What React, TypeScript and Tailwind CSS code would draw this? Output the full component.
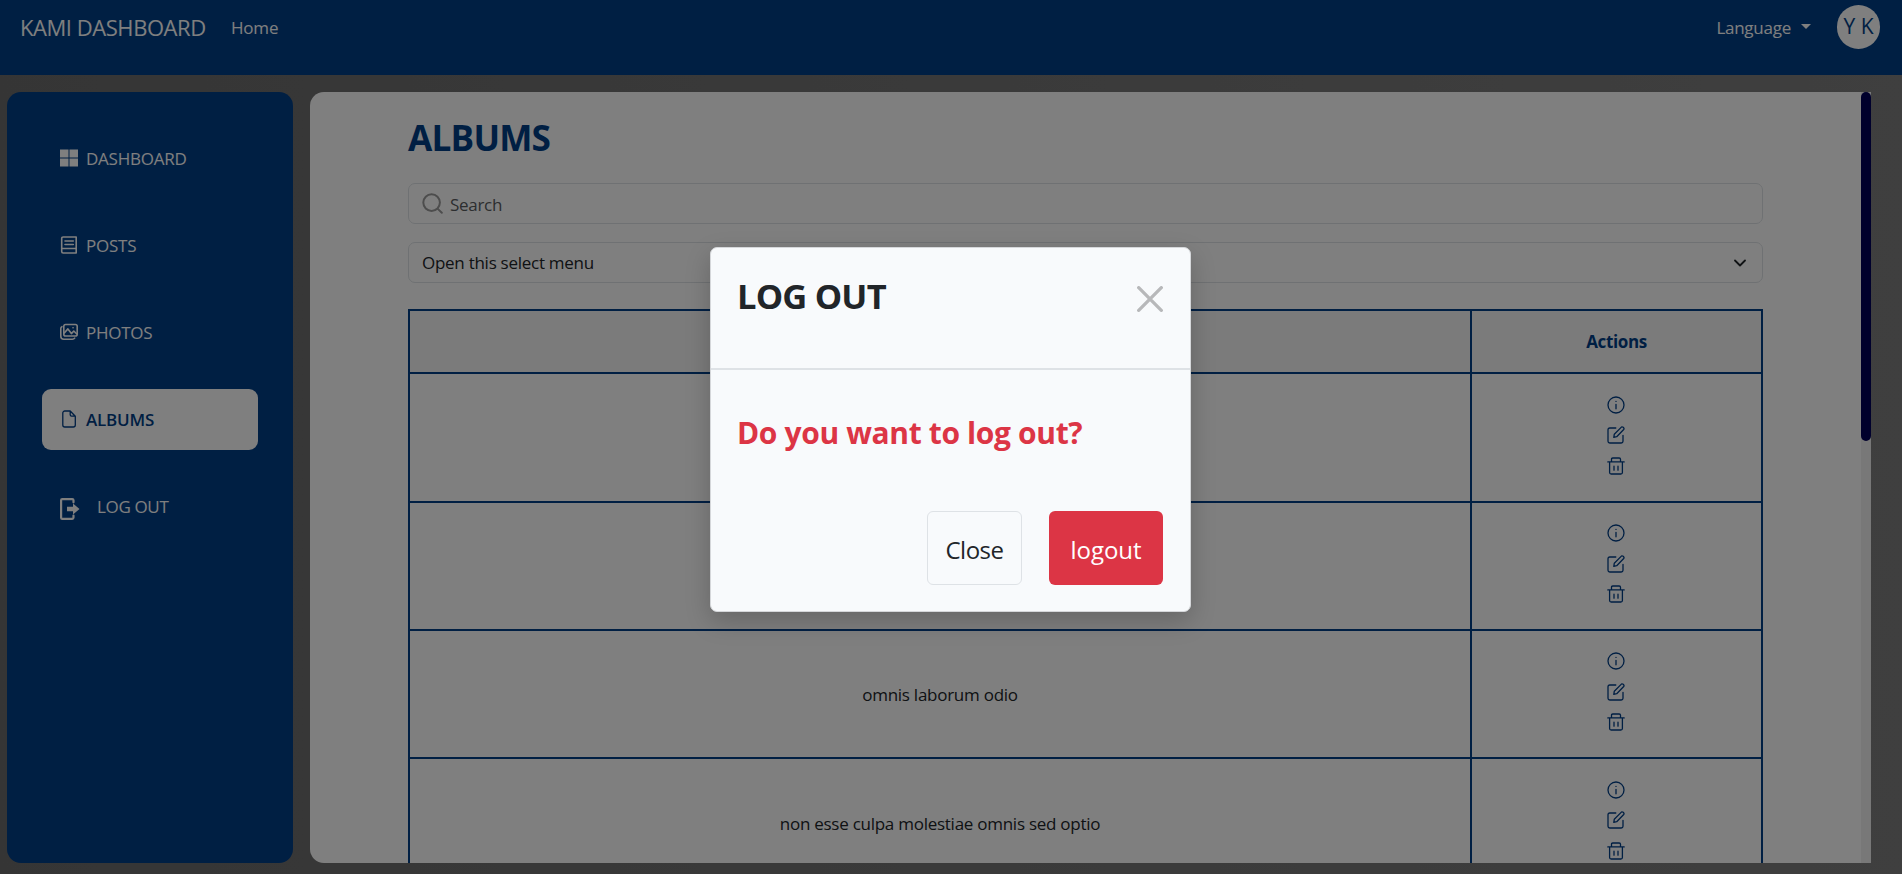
import type { ReactNode } from "react";

const stroke = {
  fill: "none",
  stroke: "currentColor",
  strokeLinecap: "round" as const,
  strokeLinejoin: "round" as const,
};

function GridIcon() {
  return (
    <svg className="ml-px h-[18px] w-[18px]" viewBox="0 0 18 18" fill="currentColor">
      <path d="M0 .5h8.500v8H0zM9.500.5H18v8H9.500zM0 9.500h8.500v8H0zM9.500 9.500H18v8H9.500z" />
    </svg>
  );
}

function PostsIcon() {
  return (
    <svg className="ml-px h-[18px] w-[18px]" viewBox="0 0 18 18" {...stroke} strokeWidth="1.600">
      <path d="M3.200 1h13v16h-13q-1.500 0-1.500-1.500v-13Q1.700 1 3.200 1zM5 5h8.300M5 8.500h8.300M2 12.500h14" />
    </svg>
  );
}

function PhotosIcon() {
  return (
    <svg className="ml-px h-[18px] w-[18px]" viewBox="0 0 18 18" {...stroke} strokeWidth="1.600">
      <rect x="3.800" y="1.500" width="13.400" height="11.500" rx="1.800" />
      <path d="M1.900 3.700Q.800 4.200.800 5.700v7.500q0 3 3 3h8.500q1.700 0 2.400-1.100M4.500 9.800l3.400-3.900 3.500 4.700 2.400-2.600 2.700 2.700" />
      <path d="M13 4.800h.1" strokeWidth="1.600" />
    </svg>
  );
}

function FileIcon() {
  return (
    <svg className="ml-px h-[18px] w-[18px]" viewBox="0 0 18 18" {...stroke} strokeWidth="1.300">
      <path d="M4.800 1h5.400l5.100 5.200v8.800a2 2 0 0 1-2 2H4.800a2 2 0 0 1-2-2V3a2 2 0 0 1 2-2zM10.200 1v3.800q0 1.400 1.400 1.400h3.700" />
    </svg>
  );
}

function ExitIcon() {
  return (
    <svg className="h-[22px] w-[20px]" viewBox="0 0 20 22" {...stroke} strokeWidth="2.200">
      <path d="M13.500 4.300V2.300Q13.500 1.100 12.200 1.100H2.300Q1.100 1.100 1.100 2.300v17.400Q1.100 20.900 2.300 20.900h9.900q1.300 0 1.300-1.300v-2" />
      <path d="M7 8.800h6V5.500l6.500 5.500-6.500 5.500V13.200H7z" fill="currentColor" stroke="none" />
    </svg>
  );
}

function SearchIcon() {
  return (
    <svg className="h-[21px] w-[21px]" viewBox="0 0 21 21" {...stroke} strokeWidth="2">
      <circle cx="9.600" cy="9.600" r="8.300" />
      <path d="m15.800 15.900 4 3.900" />
    </svg>
  );
}

function InfoIcon() {
  return (
    <svg className="h-[18px] w-[18px]" viewBox="0 0 18 18" {...stroke} strokeWidth="1.300">
      <circle cx="9" cy="9" r="8" />
      <path d="M9 8.300v4.500M9 5.300v.1" />
    </svg>
  );
}

function EditIcon() {
  return (
    <svg className="h-[18px] w-[18px]" viewBox="0 0 18 18" {...stroke} strokeWidth="1.300">
      <path d="M8.800 2H2.800Q1 2 1 3.800v11.400Q1 17 2.800 17h11.400q1.800 0 1.800-1.800V9.300" />
      <path d="M6.800 11.300l.5-3.100L14.400 1.100q.8-.6 1.800.2l.4.4q.8.900.1 1.800L9.700 10.700z" />
    </svg>
  );
}

function TrashIcon() {
  return (
    <svg className="h-[18px] w-[18px]" viewBox="0 0 18 18" {...stroke} strokeWidth="1.300">
      <path d="M.8 4.900h16.400M4.500 4.600V2.300Q4.500 1 5.800 1h6.400q1.300 0 1.300 1.300v2.300M2.600 5v10.500Q2.600 17 4.100 17h9.800q1.500 0 1.500-1.500V5M7 9.200v4M11 9.200v4" />
    </svg>
  );
}

function CloseIcon() {
  return (
    <svg className="h-[26px] w-[26px]" viewBox="0 0 26 26" {...stroke} strokeWidth="3.300">
      <path d="m1.700 1.700 22.600 22.600M24.300 1.700 1.700 24.300" />
    </svg>
  );
}

function NavItem({ icon, label, active = false }: { icon: ReactNode; label: string; active?: boolean }) {
  return (
    <li
      className={
        active
          ? "flex h-[61px] items-center gap-[8px] rounded-[9px] bg-white pl-[17px] font-semibold tracking-[-0.2px] text-[#013e87]"
          : "flex h-[61px] items-center gap-[8px] pl-[17px] tracking-[-0.25px] text-white"
      }
    >
      <span className="pb-[2px]">{icon}</span>
      <span>{label}</span>
    </li>
  );
}

function AlbumRow({ title, className }: { title: string; className: string }) {
  return (
    <div className={`grid shrink-0 grid-cols-[1060px_1fr] border-b-2 border-[#013e87] ${className}`}>
      <div className="flex items-center justify-center pt-[2px] tracking-[-0.26px] text-[#212529]">{title}</div>
      <div className="flex flex-col items-center justify-center gap-[12.5px] border-l-2 border-[#013e87] pr-px pb-[5px] text-[#013e87]">
        <InfoIcon />
        <EditIcon />
        <TrashIcon />
      </div>
    </div>
  );
}

function LogoutDialog() {
  return (
    <div className="absolute inset-0 flex items-start justify-center bg-black/50 pr-px pt-[247px]">
      <div className="flex h-[365px] w-[481px] flex-col rounded-[7px] border border-[#d5d7da] bg-[#f8fafc] shadow-[0_9px_26px_rgba(0,0,0,0.2)]">
        <div className="flex h-[122px] items-start justify-between border-b-2 border-[#dee2e6] pl-[26px] pr-[27px] pt-[24px]">
          <h2 className="text-[34.5px] leading-[48px] font-bold tracking-[-0.8px] text-[#212529]">LOG OUT</h2>
          <button className="mt-[14px] text-[#b7b8ba]">
            <CloseIcon />
          </button>
        </div>
        <p className="pl-[26px] pt-[41px] text-[30px] leading-[44px] font-bold tracking-[-0.36px] text-[#dc3545]">
          Do you want to log out?
        </p>
        <div className="mt-auto flex justify-end gap-[27px] pb-[26px] pr-[27px] text-[24px]">
          <button className="h-[74px] w-[95px] rounded-[6px] border border-[#dee2e6] pt-[3px] tracking-[-0.5px] text-[#212529]">
            Close
          </button>
          <button className="h-[74px] w-[114px] rounded-[6px] bg-[#dc3545] pt-[3px] tracking-[-0.05px] text-white">
            logout
          </button>
        </div>
      </div>
    </div>
  );
}

export default function App() {
  return (
    <div className="relative flex h-[874px] w-[1902px] flex-col overflow-hidden bg-linear-to-r from-[#6b6b6b] to-[#7e7e7e] font-['Open_Sans',sans-serif] text-[17px]">
      <header className="h-[75px] shrink-0 bg-[#013e87] text-white">
        <nav className="flex h-[54px] items-center pl-[20px] pr-[22px]">
          <span className="w-[211px] text-[22px] tracking-[-0.45px]">KAMI DASHBOARD</span>
          <a className="pt-[2px] tracking-[-0.2px]">Home</a>
          <button className="ml-auto flex items-center gap-[10px] pt-[2px] tracking-[-0.25px]">
            Language
            <svg className="mb-[3px] h-[5px] w-[10px]" viewBox="0 0 10 5" fill="currentColor">
              <path d="M0 0h10L5 5z" />
            </svg>
          </button>
          <span className="ml-[26px] flex h-[44px] w-[43px] items-center justify-center rounded-full bg-white text-[21px] text-[#013e87]">
            Y K
          </span>
        </nav>
      </header>

      <div className="flex min-h-0 flex-1 gap-[17px] pb-[11px] pl-[7px] pt-[17px]">
        <aside className="w-[286px] rounded-[14px] bg-[#013e87] px-[35px] pt-[36px]">
          <ul className="flex flex-col gap-[26px]">
            <NavItem icon={<GridIcon />} label="DASHBOARD" />
            <NavItem icon={<PostsIcon />} label="POSTS" />
            <NavItem icon={<PhotosIcon />} label="PHOTOS" />
            <NavItem icon={<FileIcon />} label="ALBUMS" active />
            <li className="flex h-[61px] items-center gap-[17px] pl-[18px] tracking-[-0.35px] text-white">
              <span className="pt-[5px]">
                <ExitIcon />
              </span>
              <span>LOG OUT</span>
            </li>
          </ul>
        </aside>

        <main className="flex w-[1561px] overflow-hidden rounded-l-[14px] bg-white">
          <div className="flex min-w-0 flex-1 flex-col pl-[98px] pr-[98px] pt-[14px]">
            <h1 className="h-[77px] text-[35.2px] leading-[62px] font-bold tracking-[-0.8px] text-[#013e87]">ALBUMS</h1>
            <div className="flex h-[41px] shrink-0 items-center gap-[7px] rounded-[7px] border border-[#dee2e6] pl-[13px] tracking-[-0.3px]">
              <span className="text-[#9a9a9a]">
                <SearchIcon />
              </span>
              <span className="pt-[2px] text-[#595c5f]">Search</span>
            </div>
            <div className="mt-[18px] flex h-[41px] shrink-0 items-center justify-between rounded-[7px] border border-[#dee2e6] pl-[13px] pr-[16px] tracking-[-0.27px] text-[#212529]">
              Open this select menu
              <svg className="h-[8px] w-[12px]" viewBox="0 0 12 8" {...stroke} strokeWidth="1.800">
                <path d="m1 1.500 5 5 5-5" />
              </svg>
            </div>
            <div className="mt-[26px] flex min-h-0 flex-1 flex-col overflow-hidden border-2 border-b-0 border-[#013e87]">
              <div className="grid h-[63px] shrink-0 grid-cols-[1060px_1fr] border-b-2 border-[#013e87] bg-[#f7f7f7] font-bold text-[#013e87]">
                <div />
                <div className="flex items-center justify-center border-l-2 border-[#013e87] pt-px tracking-[-0.35px]">Actions</div>
              </div>
              <AlbumRow title="" className="h-[129px]" />
              <AlbumRow title="" className="h-[128px]" />
              <AlbumRow title="omnis laborum odio" className="h-[128px]" />
              <AlbumRow title="non esse culpa molestiae omnis sed optio" className="h-[129px]" />
            </div>
          </div>
          <div className="w-[10px] bg-[#f0f0f0]">
            <div className="h-[349px] rounded-[5px] bg-[#000058]" />
          </div>
        </main>
      </div>

      <LogoutDialog />
    </div>
  );
}
